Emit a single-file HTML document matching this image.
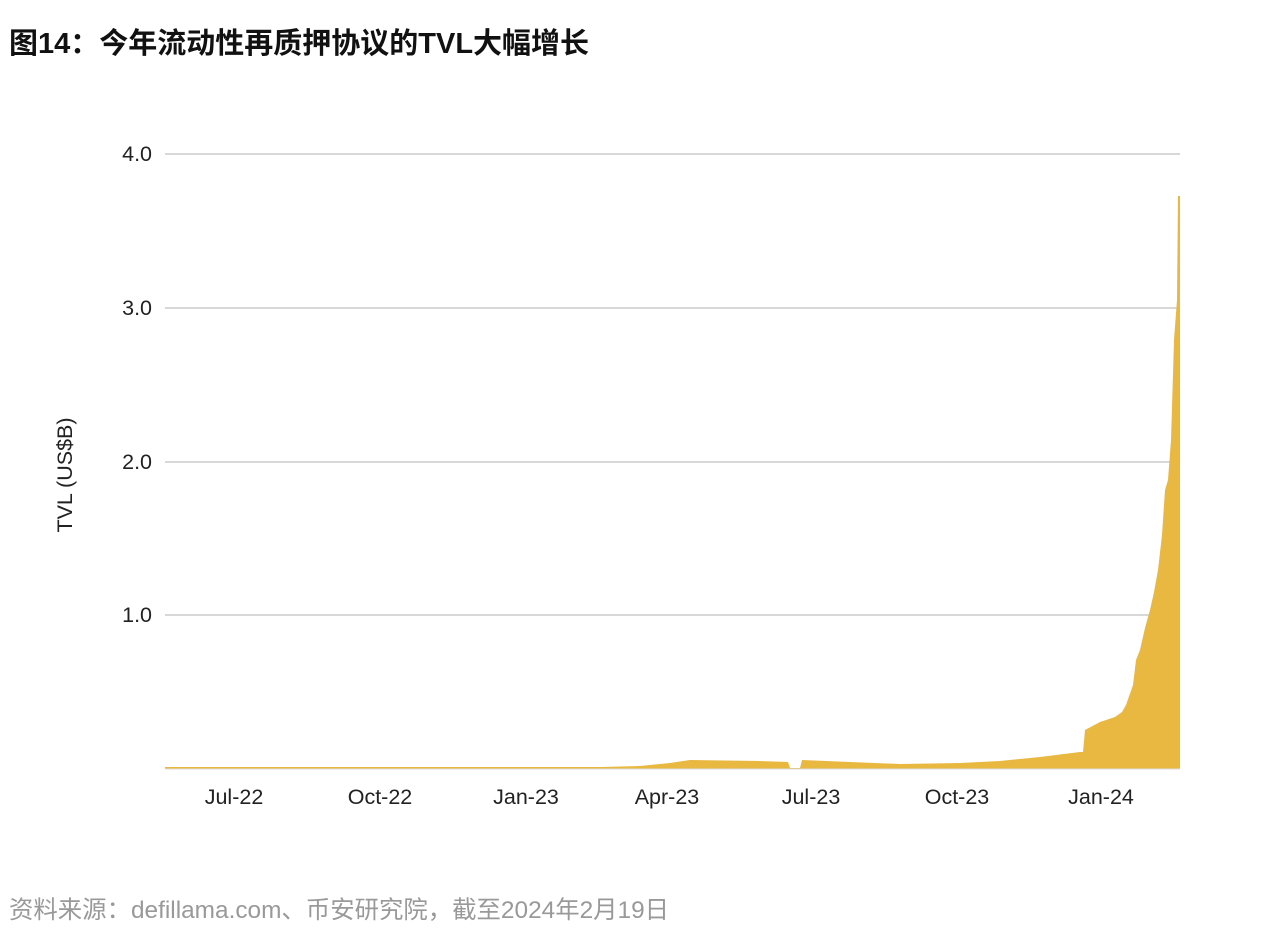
<!DOCTYPE html>
<html><head><meta charset="utf-8"><style>
html,body{margin:0;padding:0;background:#fff;width:1262px;height:936px;overflow:hidden;position:relative}
.t{position:absolute;left:9px;top:27px;font:bold 29px "Liberation Sans","Noto Sans CJK SC",sans-serif;color:#111;white-space:nowrap;line-height:34px}
.s{position:absolute;left:9px;top:896px;font:24.4px "Liberation Sans","Noto Sans CJK SC",sans-serif;color:#999;white-space:nowrap;line-height:30px}
svg{position:absolute;left:0;top:0}
svg text{font-family:"Liberation Sans",sans-serif;font-size:21.5px;fill:#222}
</style></head><body>
<div class="t">图14：今年流动性再质押协议的TVL大幅增长</div>
<svg width="1262" height="936">
<g stroke="#ccc" stroke-width="1.5">
<line x1="165" y1="154" x2="1180" y2="154"/>
<line x1="165" y1="308" x2="1180" y2="308"/>
<line x1="165" y1="462" x2="1180" y2="462"/>
<line x1="165" y1="615" x2="1180" y2="615"/>
</g>
<g text-anchor="end">
<text x="152" y="161">4.0</text>
<text x="152" y="315">3.0</text>
<text x="152" y="469">2.0</text>
<text x="152" y="622">1.0</text>
</g>
<text transform="translate(72,475) rotate(-90)" text-anchor="middle">TVL (US$B)</text>
<path fill="#e8b841" d="M165,769 L165,767 L600,767 L640,766 L670,763 L690,760 L760,761 L788,762 L790,768 L800,768 L802,760 L850,762 L900,764 L960,763 L1000,761 L1040,757 L1080,752 L1083,752 L1085,730 L1100,722 L1115,717 L1122,712 L1126,705 L1133,685 L1136,660 L1140,650 L1145,628 L1150,610 L1154,592 L1158,570 L1162,535 L1165,490 L1168,480 L1171,440 L1174,340 L1177,300 L1178,196 L1180,196 L1180,769 Z"/>
<line x1="165" y1="769" x2="1180" y2="769" stroke="#ddd" stroke-width="1"/>
<g text-anchor="middle">
<text x="234" y="804">Jul-22</text>
<text x="380" y="804">Oct-22</text>
<text x="526" y="804">Jan-23</text>
<text x="667" y="804">Apr-23</text>
<text x="811" y="804">Jul-23</text>
<text x="957" y="804">Oct-23</text>
<text x="1101" y="804">Jan-24</text>
</g>
</svg>
<div class="s">资料来源：defillama.com、币安研究院，截至2024年2月19日</div>
</body></html>
